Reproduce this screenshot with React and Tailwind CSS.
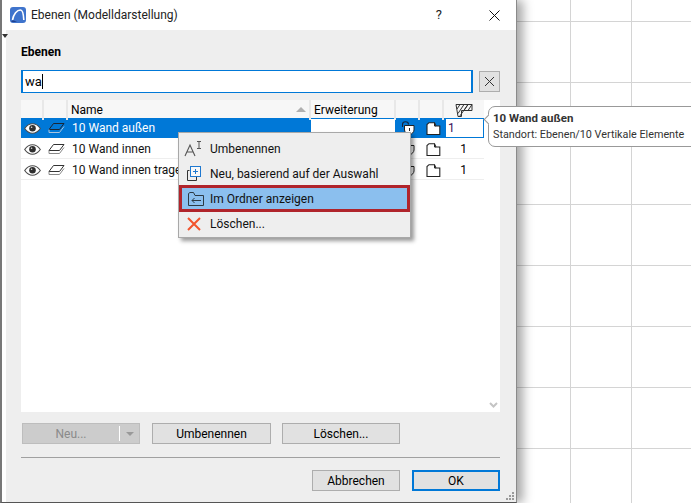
const Eye = () => (
  <svg width="17" height="11" viewBox="0 0 17 11" fill="none">
    <path d="M0.700 5.500C3 2.200 5.600 0.800 8.500 0.800S14 2.200 16.300 5.500C14 8.800 11.400 10.200 8.500 10.200S3 8.800 0.700 5.500Z" fill="#fff" stroke="#4a4a4a" strokeWidth="1.100" />
    <circle cx="8.500" cy="5.300" r="3.300" fill="#2f2f2f" />
    <circle cx="7.600" cy="4.300" r="0.800" fill="#ddd" />
  </svg>
);

const LayerIcon = ({ selected }) => (
  <svg width="17" height="11" viewBox="0 0 17 11" fill="none">
    <path d="M5.500 0.500H16L11.500 6.500H1Z" fill={selected ? "#0078d7" : "#fff"} stroke={selected ? "#1a2736" : "#333"} />
    <path d="M1 6.500V9.500H11.500L16 3.500" stroke={selected ? "#a9c4de" : "#888"} />
  </svg>
);

const Doc = () => (
  <svg className="ml-[2px]" width="15" height="13" viewBox="0 0 15 13" fill="none">
    <path d="M1 12.500V2.500L3 0.700H8.500L10 4H13.800V12.500Z" fill="#fff" stroke="#222" strokeWidth="1.100" />
    <path d="M8.500 0.700V4H10" stroke="#222" />
  </svg>
);

const Lock = () => (
  <svg width="15" height="15" viewBox="0 0 15 15" fill="none">
    <path d="M1.500 6V3.500C1.500 1.800 3 0.800 4.500 0.800S7.500 1.800 7.500 3.500" stroke="#14253a" strokeWidth="1.100" />
    <path d="M3.500 4.500H13V9C13 11 11 13 8.500 14C6 13 3.500 11 3.500 9Z" fill="#fff" stroke="#222" />
    <path d="M8.500 7V10" stroke="#222" />
  </svg>
);

const LockPeek = () => (
  <svg width="15" height="15" viewBox="0 0 15 15" fill="none">
    <path d="M3.500 3.500H13V8C13 10 11 12 8.500 13C6 12 3.500 10 3.500 8Z" fill="#fff" stroke="#222" />
  </svg>
);

const Hatch = () => (
  <svg width="18" height="13" viewBox="0 0 18 13" fill="none" stroke="#333">
    <path d="M1 0.500H17V6.500H6.500V12.500H3Z" />
    <path d="M5 0.500L2 5M9 0.500L3 9.500M13 0.500L4.500 12.500M17 0.500L13 6.500M13 0.500L9 6.500" />
  </svg>
);

const Row = ({ name, selected }) => (
  <div className={`grid grid-cols-[23px_24px_243px_85px_24px_24px_39px] items-center leading-[22px] ${selected ? "h-5 bg-[#0078d7] text-white" : "h-[21px] border-b border-[#eeeeee] text-[#111]"}`}>
    <div className="flex justify-center"><Eye /></div>
    <div className="flex justify-center"><LayerIcon selected={selected} /></div>
    <div className="pl-[4px] whitespace-nowrap overflow-hidden">{name}</div>
    {selected ? <div className="h-[18px] bg-white mr-[1px]" /> : <div />}
    <div className="flex justify-center">{selected ? <Lock /> : <LockPeek />}</div>
    <div className="flex justify-center"><Doc /></div>
    {selected ? (
      <div className="h-[18px] ml-[2px] bg-white text-[#3a0a5a] pl-[2px] leading-[19px]">1</div>
    ) : (
      <div className="text-center text-black">1</div>
    )}
  </div>
);

const Button = ({ children, className = "" }) => (
  <button className={`h-[21px] bg-[#e1e1e1] border-[#adadad] flex items-center justify-center text-black leading-none ${className}`}>
    {children}
  </button>
);

const MenuItem = ({ icon, label, active }) => (
  <div className={`flex items-center ${active ? "h-[27px] -my-px bg-[#8bbfee] border-[3px] border-[#b0242b] pl-[4px]" : "h-[25px] pl-[5px]"}`}>
    <div className={`w-[20px] h-[20px] flex items-center justify-center ${active ? "mr-[4px]" : "mr-[6px]"}`}>{icon}</div>
    <span>{label}</span>
  </div>
);

export default function App() {
  return (
    <div
      className="relative w-[691px] h-[503px] overflow-hidden bg-white bg-[linear-gradient(#d4d4d4_1px,transparent_1px),linear-gradient(90deg,#d4d4d4_1px,transparent_1px)] bg-[size:61px_61px] bg-[position:509px_21px] text-[12px] text-[#111] font-['Roboto','Noto_Sans',sans-serif]"
    >
      <div className="relative w-[517px] h-[503px] bg-white border-l-2 border-r border-b border-l-[#777] border-r-[#8a8a8a] border-b-[#555] shadow-[6px_0_10px_rgba(0,0,0,0.35)] flex flex-col">
        {/* title bar */}
        <div className="h-[30px] flex items-center shrink-0">
          <svg className="ml-[8px]" width="16" height="16" viewBox="0 0 16 16" fill="none">
            <rect width="16" height="16" rx="3" fill="#3f74cc" />
            <path d="M1 15L7 15L3 13Z" fill="#1d3f8f" />
            <path d="M2.500 13C3.500 7 7 3 10.500 3C12.500 3 13.500 7 13.800 13" stroke="#fff" strokeWidth="1.600" />
          </svg>
          <span className="ml-[5px] text-[12px] text-[#222] whitespace-nowrap">Ebenen (Modelldarstellung)</span>
          <span className="ml-auto mr-[47px] text-[#222] text-[13px]">?</span>
          <svg className="mr-[16px]" width="11" height="11" viewBox="0 0 11 11" stroke="#111" strokeWidth="1"><path d="M0.500 0.500L10.500 10.500M10.500 0.500L0.500 10.500" /></svg>
        </div>

        {/* body */}
        <div className="relative ml-[4px] flex-1 bg-[#eeeeee] flex flex-col pl-[15px] pr-[15px]">
          <div className="absolute left-[-4px] top-[4px] w-0 h-0 border-l-[3px] border-r-[3px] border-t-[4px] border-l-transparent border-r-transparent border-t-[#333]" />
          <div className="mt-[14px] h-[16px] leading-[16px] font-bold text-black">Ebenen</div>
          <div className="mt-[10px] flex items-center w-[479px]">
            <div className="w-[452px] h-[23px] bg-white border-2 border-[#0078d7] border-t-[1px] border-b-[1px] flex items-center pl-[2px] text-black text-[13px]">
              wa<span className="w-px h-[15px] bg-black" />
            </div>
            <button className="ml-[6px] w-[21px] h-[21px] bg-[#e1e1e1] border border-[#adadad] flex items-center justify-center">
              <svg width="9" height="9" viewBox="0 0 9 9" stroke="#333"><path d="M0 0L9 9M9 0L0 9" /></svg>
            </button>
          </div>

          {/* list */}
          <div className="mt-[7px] w-[479px] h-[312px] bg-white relative">
            <div className="h-[18px] w-[463px] grid grid-cols-[23px_24px_243px_85px_24px_24px_39px] bg-[#f7f7f7] items-center text-black leading-[20px]">
              <div className="h-full border-r-2 border-[#e8e8e8]" />
              <div className="h-full border-r-2 border-[#e8e8e8]" />
              <div className="h-full border-r-2 border-[#e8e8e8] pl-[3px] flex items-center relative">
                Name
                <div className="absolute right-[3px] top-[7px] w-0 h-0 border-l-[5px] border-r-[5px] border-b-[5px] border-l-transparent border-r-transparent border-b-[#b0b0b0]" />
              </div>
              <div className="h-full border-r-2 border-[#e8e8e8] pl-[3px] flex items-center">Erweiterung</div>
              <div className="h-full border-r-2 border-[#e8e8e8]" />
              <div className="h-full border-r-2 border-[#e8e8e8]" />
              <div className="h-full flex justify-center items-center"><Hatch /></div>
            </div>
            <div className="w-[463px]">
              <Row name="10 Wand außen" selected />
              <Row name="10 Wand innen" />
              <Row name="10 Wand innen tragend" />
            </div>
            <svg className="absolute right-[2px] bottom-[4px]" width="9" height="6" viewBox="0 0 9 6" fill="none" stroke="#c4c4c4" strokeWidth="2"><path d="M1 1L4.500 4.500L8 1" /></svg>
          </div>

          {/* action buttons */}
          <div className="mt-[11px] ml-[1px] flex">
            <div className="w-[118px] h-[21px] bg-[#cccccc] border border-[#bdbdbd] flex items-center text-[#8a8a8a]">
              <span className="w-[96px] text-center">Neu...</span>
              <span className="w-px h-[15px] bg-white" />
              <span className="ml-[6px] w-0 h-0 border-l-[4px] border-r-[4px] border-t-[4px] border-l-transparent border-r-transparent border-t-[#999]" />
            </div>
            <Button className="ml-[12px] w-[119px] border">Umbenennen</Button>
            <Button className="ml-[11px] w-[118px] border">Löschen...</Button>
          </div>

          <div className="mt-[13px] h-px w-[479px] bg-[#a0a0a0]" />

          <div className="mt-[12px] w-[479px] flex justify-end">
            <Button className="w-[88px] border">Abbrechen</Button>
            <button className="ml-[12px] w-[88px] h-[21px] bg-[#e1e1e1] border-2 border-[#0078d7] flex items-center justify-center text-black leading-none">OK</button>
          </div>

          <svg className="absolute right-[1px] bottom-[1px]" width="9" height="9" viewBox="0 0 9 9" fill="#9a9a9a">
            <rect x="6" y="0" width="2" height="2" /><rect x="3" y="3" width="2" height="2" /><rect x="6" y="3" width="2" height="2" /><rect x="0" y="6" width="2" height="2" /><rect x="3" y="6" width="2" height="2" /><rect x="6" y="6" width="2" height="2" />
          </svg>
        </div>
      </div>

      {/* context menu */}
      <div className="absolute left-[178px] top-[132px] w-[233px] h-[106px] bg-[#eeeeee] border border-[#a8a8a8] shadow-[3px_3px_4px_rgba(0,0,0,0.4)] pt-[3px] text-[#111]">
        <MenuItem
          label="Umbenennen"
          icon={
            <svg width="20" height="18" viewBox="0 0 20 18" fill="none" stroke="#555">
              <path d="M1 16L6 5L11 16M3 12H9" strokeWidth="1.100" />
              <path d="M13 1.500H17M15 1.500V8.500M13 8.500H17" strokeWidth="1" />
            </svg>
          }
        />
        <MenuItem
          label="Neu, basierend auf der Auswahl"
          icon={
            <svg width="16" height="17" viewBox="0 0 16 17" fill="none">
              <path d="M3.500 5.500H1.500V15.500H10.500V12" stroke="#333" />
              <rect x="4.500" y="1.500" width="10" height="10" fill="#f8f8f8" stroke="#1e78d0" />
              <path d="M9.500 4V9M7 6.500H12" stroke="#1e78d0" />
            </svg>
          }
        />
        <MenuItem
          active
          label="Im Ordner anzeigen"
          icon={
            <svg width="16" height="14" viewBox="0 0 16 14" fill="none" stroke="#2c3a44">
              <path d="M0.500 13.500V1.500L2 0.500H5.500L7 3.500H15.500V13.500Z" />
              <path d="M13 8.500H4M6.500 6L4 8.500L6.500 11" />
            </svg>
          }
        />
        <MenuItem
          label="Löschen..."
          icon={
            <svg width="14" height="14" viewBox="0 0 14 14" stroke="#f2542d" strokeWidth="2" fill="none">
              <path d="M1 1L13 13M13 1L1 13" />
            </svg>
          }
        />
      </div>

      {/* tooltip */}
      <div className="absolute left-[488px] top-[106px] w-[210px] h-[41px] bg-white border border-[#999] rounded-[7px] pl-[4px] text-[#333]">
        <div className="absolute left-[-4px] top-[9px] w-[7px] h-[7px] rotate-45 bg-white border-l border-b border-[#999]" />
        <div className="relative mt-[3px] h-[16px] leading-[16px] font-bold text-[11.500px]">10 Wand außen</div>
        <div className="relative mt-[1px] h-[16px] leading-[16px] whitespace-nowrap text-[10.800px]">Standort: Ebenen/10 Vertikale Elemente</div>
      </div>
    </div>
  );
}
